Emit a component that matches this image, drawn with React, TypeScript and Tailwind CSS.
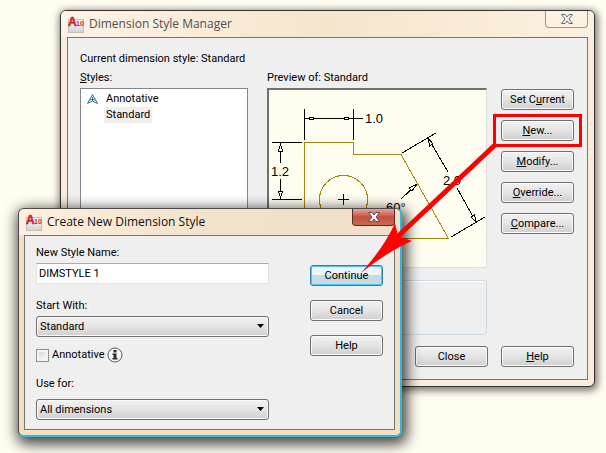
import { useState } from "react"
import type { ReactNode } from "react"
import clsx from "clsx"

function AppIcon() {
  return (
    <svg width="17" height="17" viewBox="0 0 17 17" className="shrink-0" aria-hidden="true">
      <defs>
        <linearGradient id="sheet" x1="0" y1="0" x2="0" y2="1">
          <stop offset="0" stopColor="#ffffff" />
          <stop offset="1" stopColor="#cfd2d6" />
        </linearGradient>
      </defs>
      <rect x="0.5" y="3.5" width="15" height="13" fill="url(#sheet)" stroke="#c4beb6" />
      <text x="0" y="10" fontFamily="Liberation Sans, sans-serif" fontSize="12" fontWeight="700" fill="#d41f1f" stroke="#d41f1f" strokeWidth="0.5">
        A
      </text>
      <text x="8" y="10" fontFamily="Liberation Sans, sans-serif" fontSize="7" fontWeight="700" fill="#d41f1f">
        10
      </text>
    </svg>
  )
}

function CloseGlyph({ active }: { active?: boolean }) {
  return (
    <svg width="12" height="10" viewBox="0 0 12 10" aria-hidden="true">
      <path
        d="M0.5 0.5H4L6 3L8 0.5H11.5L8 5L11.5 9.5H8L6 7L4 9.5H0.5L4 5Z"
        fill={active ? "#ffffff" : "#f5f0e8"}
        stroke={active ? "#6b4a4a" : "#6b6b72"}
      />
    </svg>
  )
}

interface WindowProps {
  title: string
  active?: boolean
  className: string
  children: ReactNode
}

function Window({ title, active, className, children }: WindowProps) {
  return (
    <section
      aria-label={title}
      className={clsx(
        "rounded-[6px] border",
        active
          ? "border-t-[#4a4a4a] border-l-[#4a4a4a] border-r-2 border-b-2 border-r-[#2cb9dd] border-b-[#2cb9dd] bg-[#f2dfc3] shadow-[2px_4px_14px_3px_rgba(0,0,0,0.75)]"
          : "border-[#333333] bg-[#faecd9] shadow-[1px_2px_7px_2px_rgba(0,0,0,0.5)]",
        className
      )}
    >
      <header
        className={clsx(
          "flex h-[26px] items-start justify-between rounded-t-[5px] pl-[7px]",
          active
            ? "bg-linear-to-r from-[#fdf0e0] via-[#f3e2cb] to-[#efe0cc] pr-[5px]"
            : "bg-linear-to-r from-[#fdf3e6] via-[#f4e6cd] to-[#fbf1e0] pr-[6px]"
        )}
      >
        <div className="flex h-full items-center gap-1">
          <AppIcon />
          <h1
            className={clsx(
              "font-['Open_Sans',sans-serif] text-[12px] leading-4 whitespace-nowrap",
              active ? "text-[#111111]" : "text-[#4f4f4f]"
            )}
          >
            {title}
          </h1>
        </div>
        <button
          type="button"
          aria-label={`Close ${title}`}
          className={clsx(
            "flex h-[17px] w-[43px] items-center justify-center rounded-b-[4px] border border-t-0",
            active
              ? "border-[#5c2a25] bg-linear-to-b from-[#dfa59b] via-[#c5503f] to-[#c96a55]"
              : "border-[#9b958c] bg-[#fbf2e4]"
          )}
        >
          <CloseGlyph active={active} />
        </button>
      </header>
      <div
        className={clsx("border border-[#77736d] bg-[#efefef]", active ? "mx-[5px] mb-[5px]" : "mx-[6px] mb-[6px]")}
      >
        {children}
      </div>
    </section>
  )
}

function Button({ children, primary }: { children: ReactNode; primary?: boolean }) {
  return (
    <button
      type="button"
      className={clsx(
        "flex h-[21px] w-[73px] shrink-0 items-center justify-center rounded-[3px] border leading-4",
        primary
          ? "border-[#2c7fae] bg-linear-to-b from-[#eef5f9] from-50% to-[#c5dbe6] to-50% shadow-[inset_0_0_0_1px_#4cc8f0]"
          : "border-[#707070] bg-linear-to-b from-[#f2f2f2] via-[#e4e4e4] via-50% to-[#cfcfcf] shadow-[inset_0_0_0_1px_#fafafa]"
      )}
    >
      <span>{children}</span>
    </button>
  )
}

function Select({ id, options }: { id: string; options: string[] }) {
  return (
    <div className="relative">
      <select
        id={id}
        className="block h-[21px] w-full appearance-none rounded-[3px] border border-[#707070] bg-linear-to-b from-[#f2f2f2] via-[#e4e4e4] via-50% to-[#cfcfcf] pl-[3px] leading-4 shadow-[inset_0_0_0_1px_#fafafa]"
      >
        {options.map((option) => (
          <option key={option}>{option}</option>
        ))}
      </select>
      <svg width="7" height="4" viewBox="0 0 7 4" className="pointer-events-none absolute top-2 right-[5px]" aria-hidden="true">
        <path d="M0 0H7L3.5 4Z" fill="#000" />
      </svg>
    </div>
  )
}

function DimensionPreview() {
  return (
    <svg width="218" height="177" viewBox="269 90 218 177" fill="none" role="img" aria-label="Standard style preview">
      <g stroke="#a9850c" shapeRendering="crispEdges">
        <path d="M304.5 238.5V142.5H353.5V154.5H401L448.5 238.5Z" />
        <circle cx="343.5" cy="199.5" r="24" />
      </g>
      <g stroke="#000" shapeRendering="crispEdges">
        <path d="M338 199.5H349M343.5 194V205" />
        {/* horizontal 1.0 */}
        <path d="M304.5 109V140M353.5 109V140M304 118.5H309M314 118.5H344M349 118.5H363" />
        <path d="M309.5 117.5H313.5V119.5H309.5ZM344.5 117.5H348.5V119.5H344.5Z" />
        {/* vertical 1.2 */}
        <path d="M272 142.5H302M272 199.5H302M280.5 143V163M280.5 179V199" />
        <path d="M280.5 144L278.5 151H282.5ZM280.5 198L278.5 191H282.5Z" fill="#fffdf0" />
        {/* aligned 2.0 */}
        <path d="M402 153L436 133M451 237L485 217M428 138L448 172M457 188L476 222" />
        <path d="M428 138L429.5 146L433 144ZM476 222L471 217L474.5 215Z" fill="#fffdf0" />
        {/* 60 degree leader */}
        <path d="M401 199L417 184" />
        <path d="M417 184L409 188L412 191Z" fill="#fffdf0" />
      </g>
      <g fill="#000" fontFamily="Liberation Sans, sans-serif" fontSize="13">
        <text x="365" y="123">1.0</text>
        <text x="271" y="176">1.2</text>
        <text x="443" y="185">2.0</text>
        <text x="386" y="212">60°</text>
      </g>
    </svg>
  )
}

function NewButton() {
  return (
    <div className="relative">
      <Button>
        <u>N</u>ew...
      </Button>
      <div className="pointer-events-none absolute -inset-x-2 -inset-y-[6px] z-20 border-[3px] border-[#ff0000]" />
      <svg
        width="140"
        height="136"
        viewBox="360 140 140 136"
        className="pointer-events-none absolute top-5 right-[74px] z-20"
        aria-hidden="true"
      >
        <path d="M495 145L394 240" stroke="#ff0000" strokeWidth="5" />
        <path d="M361 273Q385 246 395 223L398 236L412 241Q390 250 361 273Z" fill="#ff0000" />
      </svg>
    </div>
  )
}

function StyleManager() {
  return (
    <Window title="Dimension Style Manager" className="mr-[11px] ml-[60px]">
      <div className="pt-[13px] pr-[13px] pb-3 pl-3">
        <p className="leading-4">Current dimension style: Standard</p>
        <div className="mt-[3px] flex">
          <div className="flex w-[168px] shrink-0 flex-col">
            <h2 className="mb-[2px] leading-4">
              <u>S</u>tyles:
            </h2>
            <ul className="flex-1 border border-[#828790] bg-white pt-[2px]">
              <li className="flex h-4 items-center gap-2 pl-[6px] leading-4">
                <svg width="11" height="10" viewBox="0 0 11 10" fill="none" stroke="#2f6d9c" aria-hidden="true">
                  <path d="M5.5 0.5L0.5 9.5L5.5 7L10.5 9.5Z" />
                  <path d="M5.5 3V7M3 6L5.5 5L8 6" />
                </svg>
                Annotative
              </li>
              <li className="ml-[23px] w-fit bg-[#efefef] px-[2px] leading-4">Standard</li>
            </ul>
          </div>
          <div className="ml-[19px] flex min-w-0 flex-1 flex-col">
            <h2 className="mb-[2px] leading-4">Preview of: Standard</h2>
            <div className="overflow-hidden border-t-2 border-r border-b border-l-2 border-t-[#707070] border-r-[#dedede] border-b-[#dedede] border-l-[#707070] bg-[#fffdf0]">
              <DimensionPreview />
            </div>
            <div className="mt-[12px] h-[55px] rounded-[3px] border border-[#ccd9e3] shadow-[inset_1px_1px_0_#ffffff]" />
          </div>
          <div className="mt-[19px] ml-[14px] flex flex-col gap-[10px]">
            <Button>
              Set C<u>u</u>rrent
            </Button>
            <NewButton />
            <Button>
              <u>M</u>odify...
            </Button>
            <Button>
              <u>O</u>verride...
            </Button>
            <Button>
              <u>C</u>ompare...
            </Button>
          </div>
        </div>
        <div className="mt-[11px] flex justify-end gap-[13px]">
          <Button>Close</Button>
          <Button>
            <u>H</u>elp
          </Button>
        </div>
      </div>
    </Window>
  )
}

function CreateStyleDialog() {
  const [name, setName] = useState("DIMSTYLE 1")

  return (
    <Window title="Create New Dimension Style" active className="absolute top-[208px] left-[18px] z-10 w-[384px]">
      <form className="flex justify-between pt-[9px] pr-[11px] pb-[9px] pl-[11px]">
        <div className="flex w-[233px] flex-col">
          <label htmlFor="style-name" className="leading-4">
            New Style Name:
          </label>
          <input
            id="style-name"
            value={name}
            onChange={(e) => setName(e.target.value)}
            className="mt-[2px] h-[21px] border border-[#e0e3ea] border-t-[#abadb3] bg-white px-[2px] leading-4"
          />
          <label htmlFor="start-with" className="mt-[14px] mb-[2px] leading-4">
            Start With:
          </label>
          <Select id="start-with" options={["Standard", "Annotative"]} />
          <div className="mt-[10px] flex h-4 items-center">
            <input
              id="annotative"
              type="checkbox"
              className="h-[13px] w-[13px] appearance-none border border-[#8e8f8f] bg-linear-to-br from-[#cfd3d8] to-white shadow-[inset_0_0_0_2px_#f4f4f4] checked:bg-[#4b6f9c]"
            />
            <label htmlFor="annotative" className="ml-[3px] leading-4">
              Annotative
            </label>
            <svg width="16" height="16" viewBox="0 0 16 16" className="ml-[2px]" aria-hidden="true">
              <circle cx="8" cy="8" r="7" fill="#f6f6f6" stroke="#55585e" />
              <path d="M6.5 3H9.5V5.5H6.5ZM5.5 6.5H9.5V11H10.5V12.5H5.5V11H6.5V8H5.5Z" fill="#2b2b33" />
            </svg>
          </div>
          <label htmlFor="use-for" className="mt-[13px] mb-[7px] leading-4">
            Use for:
          </label>
          <Select id="use-for" options={["All dimensions", "Linear dimensions", "Angular dimensions"]} />
        </div>
        <div className="mt-5 flex flex-col gap-[14px]">
          <Button primary>Continue</Button>
          <Button>Cancel</Button>
          <Button>Help</Button>
        </div>
      </form>
    </Window>
  )
}

export default function App() {
  return (
    <main className="relative min-h-screen overflow-hidden bg-[#fffdf0] pt-[10px] font-['Roboto',sans-serif] text-[11px] text-black">
      <StyleManager />
      <CreateStyleDialog />
    </main>
  )
}
